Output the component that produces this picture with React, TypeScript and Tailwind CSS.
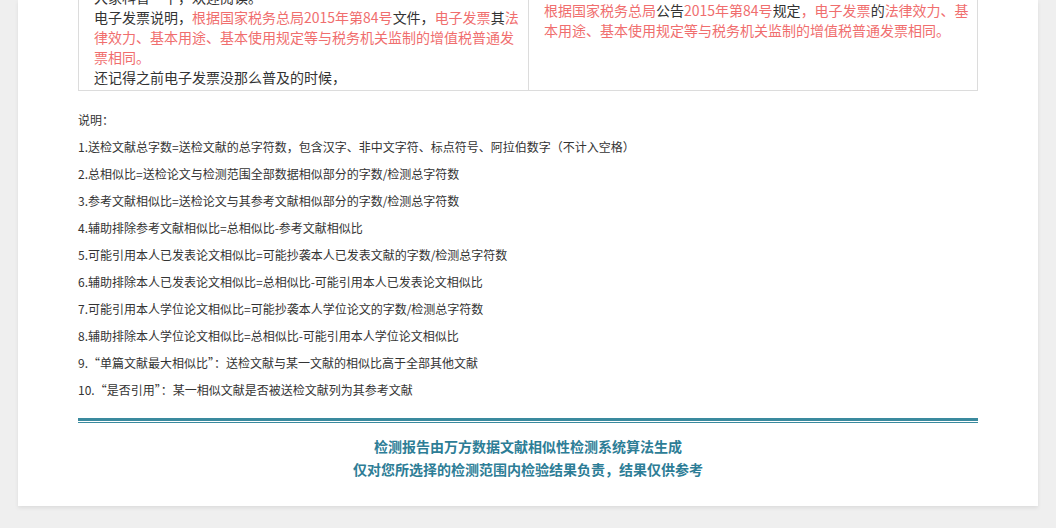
export default function App() {
  const red = "text-[#f06e6e]";
  const items = [
    "1.送检文献总字数=送检文献的总字符数，包含汉字、非中文字符、标点符号、阿拉伯数字（不计入空格）",
    "2.总相似比=送检论文与检测范围全部数据相似部分的字数/检测总字符数",
    "3.参考文献相似比=送检论文与其参考文献相似部分的字数/检测总字符数",
    "4.辅助排除参考文献相似比=总相似比-参考文献相似比",
    "5.可能引用本人已发表论文相似比=可能抄袭本人已发表文献的字数/检测总字符数",
    "6.辅助排除本人已发表论文相似比=总相似比-可能引用本人已发表论文相似比",
    "7.可能引用本人学位论文相似比=可能抄袭本人学位论文的字数/检测总字符数",
    "8.辅助排除本人学位论文相似比=总相似比-可能引用本人学位论文相似比",
    "9.“单篇文献最大相似比”：送检文献与某一文献的相似比高于全部其他文献",
    "10.“是否引用”：某一相似文献是否被送检文献列为其参考文献",
  ];
  return (
    <div className="w-[1056px] h-[528px] overflow-hidden bg-[#efefef]" style={{ fontFamily: '"Microsoft YaHei","Noto Sans CJK SC",sans-serif' }}>
      <div className="mx-[18px] h-[506px] bg-white px-[60px] shadow-[0_2px_4px_rgba(0,0,0,0.08)] overflow-hidden">
        <div className="mt-[-13px] flex border-x border-b border-[#dcdcdc] text-[14px] leading-[20px] text-[#333]">
          <div className="w-[450px] border-r border-[#dcdcdc] pl-[15px] pr-[2px] pb-[3px]">
            <p>大家科普一下，欢迎阅读。</p>
            <p>电子发票说明，<span className={red}>根据国家税务总局2015年第84号</span>文件，<span className={red}>电子发票</span>其<span className={red}>法律效力、基本用途、基本使用规定等与税务机关监制的增值税普通发票相同。</span></p>
            <p>还记得之前电子发票没那么普及的时候，</p>
          </div>
          <div className="flex-1 pl-[15px] pr-[2px] pt-[13px]">
            <p><span className={red}>根据国家税务总局</span>公告<span className={red}>2015年第84号</span>规定<span className={red}>，电子发票</span>的<span className={red}>法律效力、基本用途、基本使用规定等与税务机关监制的增值税普通发票相同。</span></p>
          </div>
        </div>
        <div className="mt-[20px] text-[12px] leading-[18px] text-[#333]">
          <p className="mb-[9px]">说明：</p>
          {items.map((t) => (
            <p key={t} className="mb-[9px]">{t}</p>
          ))}
        </div>
        <div className="mt-[19px] border-t-[3px] border-[#3a8a9e]"></div>
        <div className="mt-[1px] border-t border-[#3a8a9e]"></div>
        <div className="mt-[12px] text-center text-[14px] font-bold leading-[23px] text-[#2d7d96]">
          <p>检测报告由万方数据文献相似性检测系统算法生成</p>
          <p>仅对您所选择的检测范围内检验结果负责，结果仅供参考</p>
        </div>
      </div>
    </div>
  );
}
